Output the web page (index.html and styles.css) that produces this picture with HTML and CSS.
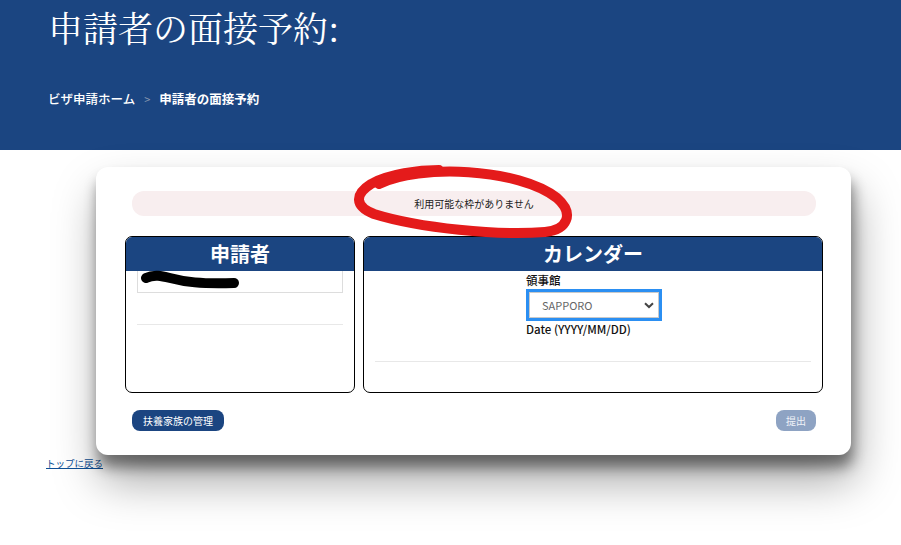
FILE: index.html
```html
<!DOCTYPE html>
<html lang="ja">
<head>
<meta charset="utf-8">
<link rel="stylesheet" href="styles.css">
</head>
<body>
<header class="hero">
  <h1 class="title">申請者の面接予約:</h1>
  <nav class="crumbs"><span class="crumb">ビザ申請ホーム</span><span class="sep">&gt;</span><span class="crumb current">申請者の面接予約</span></nav>
</header>
<main class="main">
  <section class="card">
    <div class="alert">利用可能な枠がありません</div>
    <div class="panels">
      <div class="panel applicant">
        <div class="panel-head">申請者</div>
        <div class="panel-body">
          <div class="name-box"></div>
          <hr class="rule">
        </div>
      </div>
      <div class="panel calendar">
        <div class="panel-head">カレンダー</div>
        <div class="panel-body">
          <div class="form-group">
            <label class="label">領事館</label>
            <div class="select">
              <span>SAPPORO</span>
              <svg class="chev" width="10" height="7" viewBox="0 0 10 7"><path d="M1 1.2 L5 5 L9 1.2" fill="none" stroke="#444" stroke-width="2"/></svg>
            </div>
            <label class="label">Date (YYYY/MM/DD)</label>
          </div>
          <hr class="rule wide">
        </div>
      </div>
    </div>
    <div class="actions">
      <button class="btn primary">扶養家族の管理</button>
      <button class="btn disabled">提出</button>
    </div>
    <svg class="scribble" width="110" height="30" viewBox="0 0 110 30"><path d="M6 10 C 14 6, 22 8, 30 10 C 45 14, 60 16, 94 15" fill="none" stroke="#000" stroke-width="10" stroke-linecap="round"/></svg>
    <svg class="circle" width="240" height="90" viewBox="0 0 240 90"><path d="M30 22 C 70 2, 170 6, 208 36 C 226 52, 218 68, 196 70 C 150 74, 70 66, 25 52 C 5 44, 6 32, 22 22 C 40 12, 70 8, 90 8" fill="none" stroke="#e41b1b" stroke-width="10" stroke-linecap="round"/></svg>
  </section>
  <a class="back" href="#">トップに戻る</a>
</main>
</body>
</html>
```
FILE: styles.css
```css
* { box-sizing: border-box; }
html, body { min-height: 100%; }
body {
  margin: 0;
  min-height: 545px;
  font-family: "Noto Sans CJK JP", "Noto Sans", sans-serif;
  background: #fff;
  color: #111;
}
.hero {
  background: #1b4581;
  height: 150px;
  padding: 5px 0 0 48px;
  color: #fff;
}
.title {
  margin: 0;
  font-family: "Noto Serif CJK JP", "Liberation Serif", serif;
  font-weight: 400;
  font-size: 35px;
  line-height: 44px;
}
.crumbs {
  margin-top: 41px;
  font-size: 12.5px;
  line-height: 18px;
  display: flex;
  align-items: center;
}
.crumb { font-weight: 500; }
.crumb.current { font-weight: 700; }
.sep { color: #8a98b0; margin: 0 9px 0 9px; font-size: 11px; }
.main {
  padding: 17px 0 0 46px;
}
.card {
  position: relative;
  margin-left: 50px;
  width: 755px;
  height: 288px;
  background: #fff;
  border-radius: 12px;
  box-shadow: 2px 12px 14px rgba(0,0,0,0.45), 4px 26px 46px rgba(0,0,0,0.35);
  padding: 24px 28px 0 29px;
}
.alert {
  margin: 0 7px;
  height: 25px;
  background: #f8eeef;
  border-radius: 12px;
  font-size: 10px;
  line-height: 25px;
  text-align: center;
  color: #222;
}
.panels {
  margin-top: 20px;
  display: flex;
  gap: 8px;
  height: 157px;
}
.panel {
  border: 1px solid #000;
  border-radius: 7px;
  overflow: hidden;
}
.applicant { width: 230px; }
.calendar { width: 460px; }
.panel-head {
  background: #1b4581;
  color: #fff;
  height: 34px;
  text-align: center;
  font-weight: 700;
  font-size: 20px;
  line-height: 34px;
}
.panel-body { padding: 0 11px; }
.name-box {
  height: 22px;
  border: 1px solid #ddd;
  border-top: none;
}
.rule {
  margin: 31px 0 0 0;
  border: 0;
  border-top: 1px solid #e8e8e8;
}
.form-group {
  margin-left: 151px;
  padding-top: 1px;
}
.label {
  display: block;
  font-size: 11.5px;
  line-height: 16px;
  font-weight: 500;
  color: #111;
}
.select {
  margin-top: 1px;
  width: 136px;
  height: 32px;
  border: 3px solid #2b8ff2;
  outline: 1px solid #c9c9c9;
  outline-offset: -4px;
  display: flex;
  align-items: center;
  justify-content: space-between;
  padding: 0 5px 0 13px;
  font-size: 11px;
  color: #666;
}
.chev { display: block; }
.rule.wide { margin-top: 24px; }
.actions {
  margin: 17px 7px 0 7px;
  display: flex;
  justify-content: space-between;
}
.btn {
  height: 21px;
  border: none;
  border-radius: 8px;
  font-family: inherit;
  font-size: 10px;
  color: #fff;
  padding: 0 11px;
  line-height: 21px;
}
.btn.primary { background: #1b4581; }
.btn.disabled { background: #8ea3c3; color: #eef2f8; padding: 0 10px; }
.scribble {
  position: absolute;
  left: 44px;
  top: 101px;
}
.circle {
  position: absolute;
  left: 253px;
  top: -5px;
}
.back {
  display: block;
  width: fit-content;
  margin-top: 2px;
  font-size: 9.5px;
  line-height: 12px;
  color: #0d4f96;
}
```
